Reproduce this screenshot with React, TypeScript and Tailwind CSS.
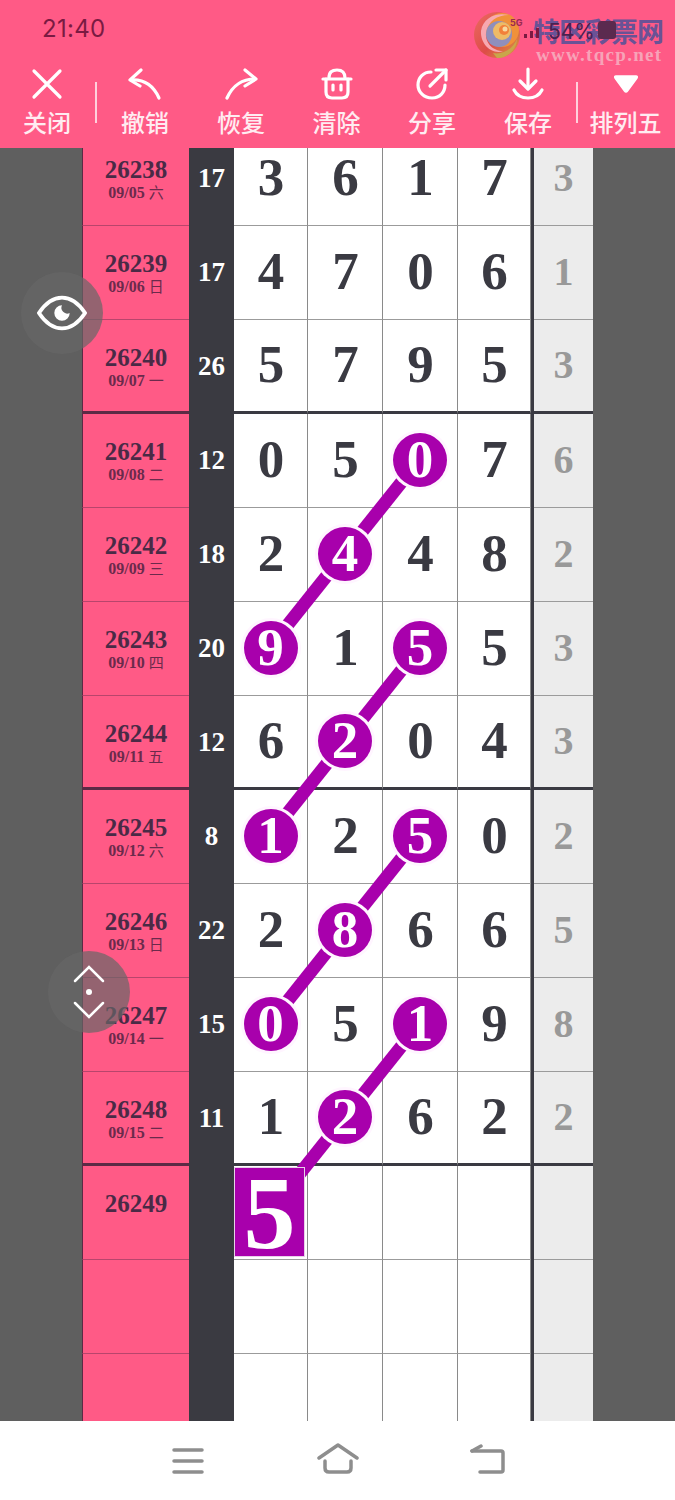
import React from "react";

type Row = { id: string; date?: string; wd?: string; sum?: string; d?: string[]; hot?: number[]; last?: string; thick?: boolean };

const rows: Row[] = [
  { id: "26238", date: "09/05", wd: "六", sum: "17", d: ["3", "6", "1", "7"], last: "3" },
  { id: "26239", date: "09/06", wd: "日", sum: "17", d: ["4", "7", "0", "6"], last: "1" },
  { id: "26240", date: "09/07", wd: "一", sum: "26", d: ["5", "7", "9", "5"], last: "3", thick: true },
  { id: "26241", date: "09/08", wd: "二", sum: "12", d: ["0", "5", "0", "7"], hot: [2], last: "6" },
  { id: "26242", date: "09/09", wd: "三", sum: "18", d: ["2", "4", "4", "8"], hot: [1], last: "2" },
  { id: "26243", date: "09/10", wd: "四", sum: "20", d: ["9", "1", "5", "5"], hot: [0, 2], last: "3" },
  { id: "26244", date: "09/11", wd: "五", sum: "12", d: ["6", "2", "0", "4"], hot: [1], last: "3", thick: true },
  { id: "26245", date: "09/12", wd: "六", sum: "8", d: ["1", "2", "5", "0"], hot: [0, 2], last: "2" },
  { id: "26246", date: "09/13", wd: "日", sum: "22", d: ["2", "8", "6", "6"], hot: [1], last: "5" },
  { id: "26247", date: "09/14", wd: "一", sum: "15", d: ["0", "5", "1", "9"], hot: [0, 2], last: "8" },
  { id: "26248", date: "09/15", wd: "二", sum: "11", d: ["1", "2", "6", "2"], hot: [1], last: "2", thick: true },
  { id: "26249", d: ["5", "", "", ""], hot: [] },
  { id: "", d: ["", "", "", ""] },
  { id: "", d: ["", "", "", ""] },
];

const SERIF = "font-['Liberation_Serif','Noto_Sans_CJK_SC',serif]";
const CJK = "font-['Noto_Sans_CJK_SC','Noto_Sans',sans-serif]";

const IconClose = () => (
  <svg width="34" height="34" viewBox="0 0 34 34" fill="none" stroke="white" strokeWidth="3.2" strokeLinecap="round">
    <path d="M4 4 L30 30 M30 4 L4 30" />
  </svg>
);
const IconUndo = () => (
  <svg width="34" height="34" viewBox="0 0 34 34" fill="none" stroke="white" strokeWidth="3.2" strokeLinecap="round" strokeLinejoin="round">
    <path d="M13 3 L2 13 L12 19" />
    <path d="M3 13 C17 12 26 20 31 31" />
  </svg>
);
const IconRedo = () => (
  <svg width="34" height="34" viewBox="0 0 34 34" fill="none" stroke="white" strokeWidth="3.2" strokeLinecap="round" strokeLinejoin="round">
    <path d="M21 3 L32 12 L21 19" />
    <path d="M31 12 C17 12 8 20 3 31" />
  </svg>
);
const IconBin = () => (
  <svg width="34" height="34" viewBox="0 0 34 34" fill="none" stroke="white" strokeWidth="3.2" strokeLinecap="round" strokeLinejoin="round">
    <path d="M9 11 C9 5 12 3 17 3 C22 3 25 5 25 11" />
    <path d="M3 12 H31" />
    <path d="M6 12 V25 C6 29 8 31 12 31 H22 C26 31 28 29 28 25 V12" />
    <path d="M13 18 V23 M21 18 V23" />
  </svg>
);
const IconShare = () => (
  <svg width="34" height="34" viewBox="0 0 34 34" fill="none" stroke="white" strokeWidth="3.2" strokeLinecap="round" strokeLinejoin="round">
    <path d="M16 5 C8 5 3 11 3 18 C3 25 9 31 17 31 C25 31 30 25 30 18" />
    <path d="M15 19 L31 3" />
    <path d="M21 3 H31 V13" />
  </svg>
);
const IconSave = () => (
  <svg width="34" height="34" viewBox="0 0 34 34" fill="none" stroke="white" strokeWidth="3.2" strokeLinecap="round" strokeLinejoin="round">
    <path d="M17 2 V21" />
    <path d="M9 14 L17 22 L25 14" />
    <path d="M3 23 C6 29 11 31 17 31 C23 31 28 29 31 23" />
  </svg>
);
const IconTri = () => (
  <svg width="34" height="34" viewBox="0 0 34 34">
    <path d="M7 9 H27 Q29 9 28 11 L18.5 24 Q17 26 15.5 24 L6 11 Q5 9 7 9 Z" fill="white" stroke="white" strokeWidth="1.5" />
  </svg>
);

function Tool({ icon, label, w }: { icon: React.ReactNode; label: string; w: string }) {
  return (
    <div className={`flex flex-col items-center pt-[5px] ${w}`}>
      <div className="h-[34px] flex items-center">{icon}</div>
      <span className={`${CJK} text-[24px] leading-[34px] mt-[4px] font-medium text-[#ffecf1] whitespace-nowrap`}>{label}</span>
    </div>
  );
}

const Logo = () => (
  <svg width="48" height="52" viewBox="0 0 48 52">
    <defs>
      <linearGradient id="lg" x1="0" y1="0" x2="1" y2="1">
        <stop offset="0" stopColor="#ec6a62" />
        <stop offset="0.55" stopColor="#dd4c48" />
        <stop offset="1" stopColor="#d9a23f" />
      </linearGradient>
    </defs>
    <circle cx="24" cy="26" r="23" fill="url(#lg)" />
    <circle cx="29" cy="21" r="17" fill="#f0913a" />
    <path d="M8 22 C10 8 24 3 36 6 C24 6 15 12 13 24 C12 34 20 42 30 42 C20 46 7 36 8 22 Z" fill="#f7a8b0" />
    <circle cx="26" cy="25" r="13" fill="#8f8fbc" />
    <circle cx="29" cy="22" r="9" fill="#eebb66" />
    <circle cx="31" cy="21" r="5" fill="#f2803a" />
    <circle cx="32" cy="20" r="2.5" fill="#f7d9a0" />
    <path d="M20 44 C30 46 40 40 44 30 C44 40 34 50 24 49 Z" fill="#c9a64a" />
  </svg>
);

function Header() {
  return (
    <div className="h-[148px] bg-[#ff5a86] relative shrink-0">
      <div className="h-[62px] pl-[42px] pt-[15px] text-[24px] leading-[28px] text-[#7a1a42] font-['Inter',sans-serif] tracking-[0.3px]">21:40</div>
      {/* status icons and watermark laid over each other */}
      <div className="absolute left-[473px] top-[9px]"><Logo /></div>
      <div className={`absolute left-[533px] top-[16px] text-[27px] leading-[30px] font-bold text-[#6a5296] tracking-[-1px] whitespace-nowrap ${CJK}`}>特区彩票网</div>
      <div className="absolute left-[536px] top-[44px] text-[19px] leading-[22px] text-[#f7a3b8] tracking-[1.3px] font-['Liberation_Serif',serif] font-bold whitespace-nowrap">www.tqcp.net</div>
      <div className="absolute left-[510px] top-[18px] text-[9px] leading-[10px] font-bold text-[#9a2a50] font-['Inter',sans-serif]">5G</div>
      <svg className="absolute left-[524px] top-[26px]" width="20" height="12" viewBox="0 0 20 12" fill="#7a1a42">
        <rect x="0" y="8" width="3" height="4" />
        <rect x="6" y="5" width="3" height="7" />
        <rect x="12" y="2" width="3" height="10" />
      </svg>
      <div className="absolute left-[548px] top-[19px] text-[21px] leading-[26px] text-[#4a2050] font-['Inter',sans-serif]">54%</div>
      <div className="absolute left-[598px] top-[21px] w-[18px] h-[18px] rounded-[3px] bg-[#5b2a4f]" />

      <div className="flex items-start pl-[3px]">
        <Tool icon={<IconClose />} label="关闭" w="w-[88px] mr-[4px]" />
        <div className="w-[2px] h-[41px] mt-[20px] bg-[#ffd0dc] shrink-0" />
        <Tool icon={<IconUndo />} label="撤销" w="w-[96px]" />
        <Tool icon={<IconRedo />} label="恢复" w="w-[96px]" />
        <Tool icon={<IconBin />} label="清除" w="w-[95px]" />
        <Tool icon={<IconShare />} label="分享" w="w-[96px]" />
        <Tool icon={<IconSave />} label="保存" w="w-[96px]" />
        <div className="w-[2px] h-[41px] mt-[20px] bg-[#ffd0dc] shrink-0" />
        <Tool icon={<IconTri />} label="排列五" w="w-[95px]" />
      </div>
    </div>
  );
}

function BoardRow({ r }: { r: Row }) {
  const line = r.thick ? "border-b-[3px] border-[#3a3a42]" : "border-b-[1px] border-[#9b9b9b]";
  return (
    <div className="flex h-[94px]">
      <div className={`w-[107px] shrink-0 border-l-[1px] border-l-[#5c2a45] flex flex-col items-center pt-[23px] ${r.thick ? "border-b-[3px] border-b-[#5c2a45]" : "border-b-[1px] border-b-[#b8456c]"} bg-[#ff5a86] ${SERIF}`}>
        <span className="text-[25px] leading-[30px] font-bold text-[#4a2a46]">{r.id}</span>
        {r.date && (
          <span className="text-[16px] leading-[18px] mt-[-2px] font-bold text-[#6b2a4c] whitespace-nowrap">
            {r.date} <span className={`${CJK} font-normal text-[15px]`}>{r.wd}</span>
          </span>
        )}
      </div>
      <div className={`w-[45px] shrink-0 bg-[#3a3a41] flex items-center justify-center pb-[2px] text-white text-[27px] font-bold ${SERIF}`}>{r.sum}</div>
      {r.d!.map((v, i) => {
        const hot = r.hot?.includes(i);
        const square = r.id === "26249" && i === 0;
        return (
          <div key={i} className={`${i === 3 ? "w-[73px]" : i === 0 ? "w-[74px]" : "w-[75px]"} shrink-0 bg-white flex items-center justify-center pb-[2px] border-r-[1px] border-r-[#8a8a8a] ${line} ${SERIF} font-bold text-[53px] text-[#3a3a42] relative`}>
            {hot ? (
              <span className="relative z-20 w-[54px] h-[54px] rounded-full bg-[#a800ac] ring-[3px] ring-[#fff5ff] text-white flex items-center justify-center">{v}</span>
            ) : square ? (
              <span className="absolute z-20 left-0 top-[1px] w-[71px] h-[90px] bg-[#a800ac] text-white text-[104px] leading-[90px] font-bold text-center border border-[#e7d0e8]">{v}</span>
            ) : (
              <span className="ml-[1px]">{v}</span>
            )}
          </div>
        );
      })}
      <div className="w-[3px] shrink-0 bg-[#3a3a42]" />
      <div className={`w-[59px] shrink-0 bg-[#ececec] flex items-center justify-center pb-[2px] text-[40px] font-bold text-[#999999] ${line} ${SERIF}`}>{r.last}</div>
    </div>
  );
}

function Board() {
  return (
    <div className="h-[1273px] overflow-hidden bg-[#5f5f5f] relative shrink-0">
      <div className="w-[593px] ml-[82px] mt-[-16px] relative">
        {rows.map((r, i) => <BoardRow key={i} r={r} />)}
        {/* connecting strokes lie over the grid, under the circles */}
        <svg className="absolute left-[152px] top-0 z-10 pointer-events-none" width="300" height="1300" viewBox="0 0 300 1300" fill="none" stroke="#a800ac" strokeWidth="13">
          <path d="M186 327 L36 515" />
          <path d="M186 515 L36 703" />
          <path d="M186 703 L36 891" />
          <path d="M186 891 L36 1079" />
        </svg>
      </div>
      {/* floating buttons */}
      <div className="absolute z-30 left-[21px] top-[124px] w-[82px] h-[82px] rounded-full bg-[#666666]/70 flex items-center justify-center">
        <svg width="50" height="36" viewBox="0 0 52 36" fill="none">
          <path d="M2 18 C10 6 18 2 26 2 C34 2 42 6 50 18 C42 30 34 34 26 34 C18 34 10 30 2 18 Z" stroke="white" strokeWidth="4" strokeLinejoin="round" />
          <path d="M26 10 A8 8 0 1 0 34 18 A6 6 0 0 1 26 10 Z" fill="white" />
        </svg>
      </div>
      <div className="absolute z-30 left-[48px] top-[803px] w-[82px] h-[82px] rounded-full bg-[#666666]/70 flex items-center justify-center">
        <svg width="32" height="56" viewBox="0 0 32 56" fill="none" stroke="white" strokeWidth="2.5" strokeLinecap="round">
          <path d="M2 17 L16 3 L30 17" />
          <circle cx="16" cy="28" r="3" fill="white" stroke="none" />
          <path d="M2 39 L16 53 L30 39" />
        </svg>
      </div>
    </div>
  );
}

function NavBar() {
  return (
    <div className="h-[79px] bg-white flex items-start pt-[22px] pl-[170px] shrink-0">
      <svg width="36" height="32" viewBox="0 0 36 32" fill="none" stroke="#8e8e8e" strokeWidth="3.5" strokeLinecap="round">
        <path d="M4 7 H32 M4 18 H32 M4 29 H32" />
      </svg>
      <svg className="ml-[110px]" width="44" height="32" viewBox="0 0 44 32" fill="none" stroke="#8e8e8e" strokeWidth="3.5" strokeLinecap="round" strokeLinejoin="round">
        <path d="M3 15 L22 2 L41 15" />
        <path d="M9 18 V25 Q9 29 13 29 H31 Q35 29 35 25 V18" />
      </svg>
      <svg className="ml-[110px]" width="36" height="32" viewBox="0 0 36 32" fill="none" stroke="#8e8e8e" strokeWidth="3.5" strokeLinecap="round" strokeLinejoin="round">
        <path d="M2 8 H31 Q33 8 33 10 V27 Q33 29 31 29 H10" />
        <path d="M11 3 L2 8" />
      </svg>
    </div>
  );
}

export default function App() {
  return (
    <div className="w-[675px] h-[1500px] flex flex-col overflow-hidden">
      <Header />
      <Board />
      <NavBar />
    </div>
  );
}
